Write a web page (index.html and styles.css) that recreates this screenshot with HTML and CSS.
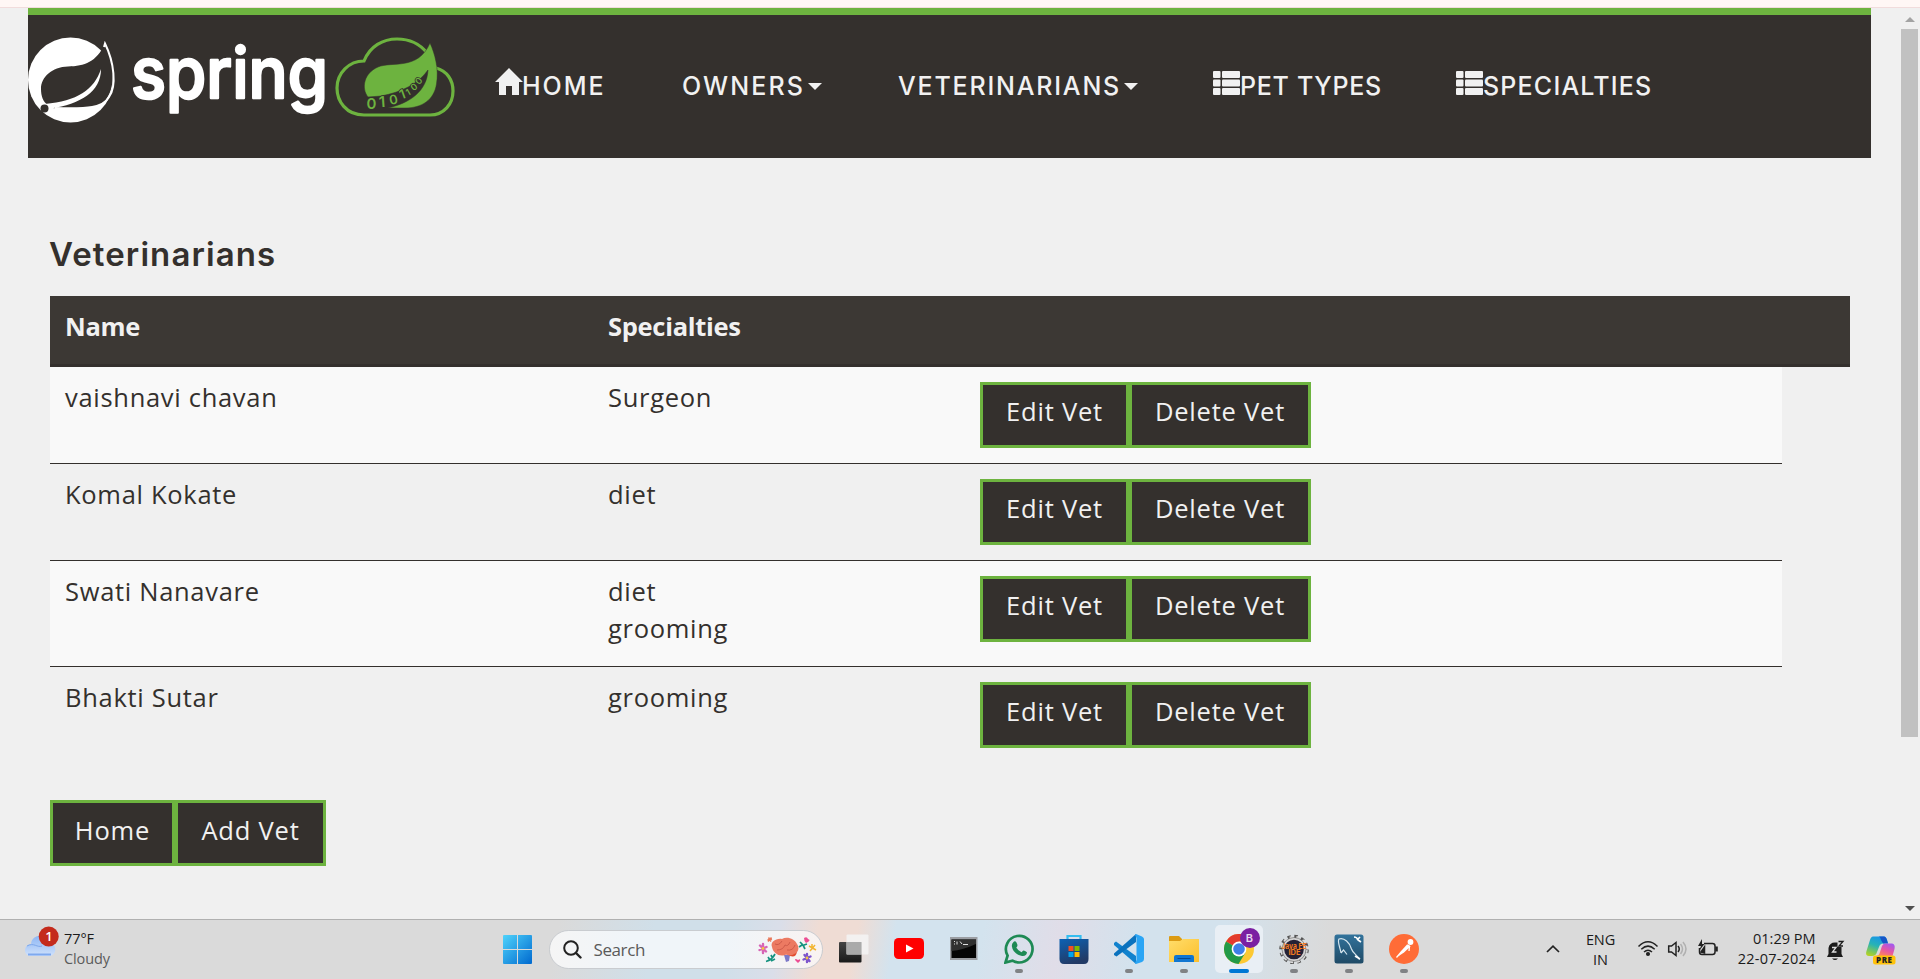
FILE: index.html
```html
<!DOCTYPE html>
<html lang="en">
<head>
<meta charset="utf-8">
<title>Veterinarians</title>
<link rel="stylesheet" href="styles.css">
</head>
<body>
<svg width="0" height="0" class="defs" aria-hidden="true">
  <defs>
    <linearGradient id="win" x1="0" y1="0" x2="1" y2="1"><stop offset="0" stop-color="#4fd3fb"/><stop offset="1" stop-color="#0069cf"/></linearGradient>
    <linearGradient id="cloud" x1="0" y1="0" x2="0" y2="1"><stop offset="0" stop-color="#8db6f4"/><stop offset="1" stop-color="#cfe1fb"/></linearGradient>
    <linearGradient id="store" x1="0" y1="0" x2="0.4" y2="1"><stop offset="0" stop-color="#0c62b4"/><stop offset="1" stop-color="#223a66"/></linearGradient>
    <linearGradient id="folder" x1="0" y1="0" x2="1" y2="1"><stop offset="0" stop-color="#ffdd6b"/><stop offset="1" stop-color="#fcbf2c"/></linearGradient>
    <linearGradient id="sql" x1="0" y1="0" x2="0" y2="1"><stop offset="0" stop-color="#32739c"/><stop offset="1" stop-color="#1f4a66"/></linearGradient>
    <linearGradient id="copA" x1="0.6" y1="0" x2="0.2" y2="1"><stop offset="0" stop-color="#1795e8"/><stop offset=".45" stop-color="#27b3b5"/><stop offset="1" stop-color="#b4d321"/></linearGradient>
    <linearGradient id="copB" x1="0.8" y1="0" x2="0.2" y2="1"><stop offset="0" stop-color="#a158f0"/><stop offset=".5" stop-color="#e556a5"/><stop offset="1" stop-color="#ff8a52"/></linearGradient>
    <linearGradient id="tvA" x1="0" y1="0" x2="0" y2="1"><stop offset="0" stop-color="#444"/><stop offset="1" stop-color="#1a1a1a"/></linearGradient>
    <symbol id="list" viewBox="0 0 27 24"><g fill="#f1f1f1"><rect width="7.500" height="7" rx="1"/><rect y="8.500" width="7.500" height="7" rx="1"/><rect y="17" width="7.500" height="7" rx="1"/><rect x="9" width="18" height="7" rx="1"/><rect x="9" y="8.500" width="18" height="7" rx="1"/><rect x="9" y="17" width="18" height="7" rx="1"/></g></symbol>
  </defs>
</svg>
<div class="strip"></div>
<div class="viewport">
  <div class="page">
    <nav class="navbar">
      <svg class="logo" width="430" height="110" viewBox="28 25 430 110">
        <circle cx="70.500" cy="80" r="42.500" fill="#fff"/>
        <path d="M105 44C96 62 85 66 68 66.500C52 67 41 77 41 89C41 96 43 102 48 105L52 108C88 109 101 108 107 98C116 85 114 62 105 44Z" fill="#34302d"/>
        <path d="M104 47L105 43.500C114 62 117 86 109 97C103 108 88 109 55 108" fill="none" stroke="#fff" stroke-width="2"/>
        <path d="M101 69C94 90 77 101 45 104L51 108.500C80 104 101 92 101 69Z" fill="#fff"/>
        <circle cx="44.500" cy="108.500" r="4" fill="#34302d"/>
        <text class="wordmark" x="131" y="98" textLength="197" lengthAdjust="spacingAndGlyphs">spring</text>
        <path d="M364 115C346 115 337 101 337 88C337 73 349 61 364 61C370 46 383 39 397 39C409 39 420 44 427 53L436 68C447 71 453 80 453 91C453 104 444 115 430 115Z" fill="none" stroke="#6db33f" stroke-width="3.200"/>
        <path d="M430 43C435 54 439 69 436.500 84C434 100 422 108 405 108H388C410 103 427 91 428 70C418 84 402 92 381 96L368 97C361 88 364 73 378 67C392 61 418 71 430 43Z" fill="#6db33f" stroke="#34302d" stroke-width=".5"/>
        <g class="bits"><text x="366.500" y="109">0</text><text x="379" y="107" transform="rotate(-4 384 103)">1</text><text class="b2" x="389" y="104" transform="rotate(-12 394 99)">0</text><text class="b2" x="400" y="99" transform="rotate(-20 402 96)">1</text><text class="b3" x="406" y="95" transform="rotate(-30 409 92)">1</text><text class="b3" x="411" y="90" transform="rotate(-40 414 87)">0</text><text class="b3" x="416" y="84" transform="rotate(-50 419 81)">0</text></g>
      </svg>
      <div class="menu">
        <a class="item home"><svg width="28" height="27" viewBox="0 0 28 27"><path d="M14 0L28 14H24V27H17V18H11V27H4V14H0Z" fill="#f1f1f1"/></svg><span>HOME</span></a>
        <a class="item owners"><span>OWNERS</span><i class="caret"></i></a>
        <a class="item vets"><span>VETERINARIANS</span><i class="caret"></i></a>
        <a class="item types"><svg width="27" height="24"><use href="#list"/></svg><span>PET TYPES</span></a>
        <a class="item specs"><svg width="27" height="24"><use href="#list"/></svg><span>SPECIALTIES</span></a>
      </div>
    </nav>
    <main class="content">
      <h2 class="title">Veterinarians</h2>
      <div class="thead"><div class="c-name">Name</div><div class="c-spec">Specialties</div></div>
      <div class="row odd"><div class="c-name">vaishnavi chavan</div><div class="c-spec">Surgeon</div><div class="actions"><button class="btn edit">Edit Vet</button><button class="btn delete">Delete Vet</button></div></div>
      <div class="row"><div class="c-name">Komal Kokate</div><div class="c-spec">diet</div><div class="actions"><button class="btn edit">Edit Vet</button><button class="btn delete">Delete Vet</button></div></div>
      <div class="row odd tall"><div class="c-name">Swati Nanavare</div><div class="c-spec">diet<br>grooming</div><div class="actions"><button class="btn edit">Edit Vet</button><button class="btn delete">Delete Vet</button></div></div>
      <div class="row last"><div class="c-name">Bhakti Sutar</div><div class="c-spec">grooming</div><div class="actions"><button class="btn edit">Edit Vet</button><button class="btn delete">Delete Vet</button></div></div>
      <div class="actions foot"><button class="btn go-home">Home</button><button class="btn add">Add Vet</button></div>
    </main>
  </div>
  <div class="scrollbar"><i class="up"></i><div class="thumb"></div><i class="down"></i></div>
</div>
<footer class="taskbar">
  <div class="weather">
    <svg width="36" height="32" viewBox="24 925 36 32"><path d="M31 956C23 956 23 945 31 944C32 934 46 933 48 942C57 942 58 956 49 956Z" fill="url(#cloud)"/><path d="M27 946C34 942 37 948 42 946" stroke="#7da7ea" fill="none"/><path d="M28 954.500H51" stroke="#7ea9ee" stroke-width="2"/><circle cx="48.700" cy="936.500" r="10" fill="#c42b1c"/><text class="badge" x="49" y="941">1</text></svg>
    <div class="lines"><span>77°F</span><span class="muted">Cloudy</span></div>
  </div>
  <svg class="start" width="30" height="30" viewBox="0 0 30 30"><path d="M0 1Q0 0 1 0H14V14H0ZM15 0H28Q29 0 29 1V14H15ZM0 15H14V29H1Q0 29 0 28ZM15 15H29V28Q29 29 28 29H15Z" fill="url(#win)"/></svg>
  <div class="search">
    <svg width="19" height="19" viewBox="0 0 19 19"><circle cx="8" cy="8" r="6.800" fill="none" stroke="#222" stroke-width="2"/><path d="M13 13L17.500 17.500" stroke="#222" stroke-width="2.400" stroke-linecap="round"/></svg>
    <span>Search</span>
    <svg class="brain" width="60" height="28" viewBox="757 936 60 28">
      <path d="M784 955L786 962L789 961L790 955Z" fill="#7c78c8"/><path d="M787 954Q795 960 797 952Z" fill="#e14b2e"/>
      <path d="M772 947C770 942 776 938 782 939C787 936 795 939 797 944C800 948 798 953 794 954C790 957 787 954 785 955C779 957 773 953 772 947Z" fill="#ec7a62"/>
      <path d="M775 944Q779 946 782 941M777 950Q783 950 785 945Q788 947 790 942M787 950Q793 951 795 945" fill="none" stroke="#cf5c4b" stroke-width="1"/>
      <g stroke="#d765b5" stroke-width="2.400" stroke-linecap="round"><path d="M760 945.500L766 951.500M763 944V953M759.500 950L766.500 947"/></g><circle cx="763" cy="948.500" r="1.400" fill="#f5c342"/>
      <g stroke="#7d55cc" stroke-width="2.400" stroke-linecap="round"><path d="M804.500 955L809.500 961M807 954V962M803.500 959.500L810.500 956.500"/></g><circle cx="807" cy="958" r="1.400" fill="#f5c342"/>
      <path d="M766 961.500Q772 960 775 954M768 957L770 960M771 955L772.500 958M771 961L775 959" fill="none" stroke="#15927f" stroke-width="1.700"/>
      <path d="M800 942L803 945L805 949M802 945L799 947M804 945L807 944" fill="none" stroke="#15927f" stroke-width="1.700"/>
      <path d="M804 938Q807 936 808 939Q812 940 806 943Q804 941 804 938Z" fill="#ec4e93"/><path d="M798 963L795 960Q795 958 798 960Q801 958 800 961Z" fill="#ec4e93"/>
      <path d="M809 946L816 950M815 945L810 951M812 944V949" stroke="#f2b632" stroke-width="1.500"/><path d="M767.500 940L772 939M768.500 937.500L771 941.500M771.500 937.500L768 941.500" stroke="#e9785a" stroke-width="1.500"/>
    </svg>
  </div>
  <div class="apps">
    <div class="app"><svg viewBox="0 0 30 30"><rect x="0" y="8" width="22.500" height="20.500" rx="1" fill="url(#tvA)"/><rect x="7.500" y=".5" width="22" height="20" rx="1" fill="#f4f4f4" opacity=".88"/><path d="M7.500 8H22.500V20.500H7.500Z" fill="#aaa"/></svg></div>
    <div class="app"><svg viewBox="0 0 30 30"><rect y="4" width="30" height="21" rx="4.500" fill="#f00"/><path d="M12 10.500V18.500L19.500 14.500Z" fill="#fff"/></svg></div>
    <div class="app"><svg viewBox="0 0 30 30"><rect x="1" y="3" width="27.500" height="23" fill="#9b9ea3"/><rect x="2.500" y="5.500" width="24.500" height="18.500" fill="#050505"/><path d="M2.500 5.500H27V10Q14 16 2.500 17Z" fill="#303030"/><path d="M5 7.500H6M5 10H6M8 7.500V10.500M11 7.500L13 10M14 10.500H19" stroke="#ddd"/></svg></div>
    <div class="app run"><svg viewBox="0 0 30 30"><path d="M1.500 28.500L3.600 21.600A13.300 13.300 0 1 1 8.500 26.600Z" fill="none" stroke="#1e8a54" stroke-width="2.700"/><path d="M9.500 8Q11 6.500 12.500 8.500L13.500 11Q13.500 12.500 12.300 13.500Q14 16.800 17.500 18.200L19 16.800Q20 16 23 18.300Q22.500 22.500 18 22Q9 20 7.800 12Q7.800 9.500 9.500 8Z" fill="#1e8a54"/></svg></div>
    <div class="app"><svg viewBox="0 0 30 30"><path d="M8.500 6V2H21.500V6" fill="none" stroke="#35bdf0" stroke-width="2.200"/><path d="M.5 5H29.500V25Q29.500 30 25 30H5Q.5 30 .5 25Z" fill="url(#store)"/><path d="M9.500 12H14.500V17H9.500Z" fill="#f25022"/><path d="M15.500 12H20.500V17H15.500Z" fill="#7fba00"/><path d="M9.500 18H14.500V23H9.500Z" fill="#00a4ef"/><path d="M15.500 18H20.500V23H15.500Z" fill="#ffb900"/></svg></div>
    <div class="app run"><svg viewBox="0 0 30 30"><path d="M0 9L2 7.500L22 22L22 30L0 11Z" fill="#1182ce"/><path d="M22 0V8L2.500 22.500L0 21V19.500Z" fill="#0a72be"/><path d="M22 0L28 2.500Q30 3.500 30 5V25Q30 27 28 28L22 30L21 29L22.500 26V4L21 1Z" fill="#2aa5f5"/></svg></div>
    <div class="app run"><svg viewBox="0 0 30 30"><path d="M0 3Q0 2 1 2H10L13 5V9H0Z" fill="#dc9b13"/><path d="M0 7H11L14 5H30V28H0Z" fill="url(#folder)"/><path d="M5 28V23Q5 21 7 21H23Q25 21 25 23V28Z" fill="#1076d2"/><path d="M8.500 24.500H21.500" stroke="#074a91"/></svg></div>
    <div class="app run active"><svg viewBox="0 0 30 30"><circle cx="15" cy="15" r="15" fill="#fcc934"/><path d="M15 15L2 7.500A15 15 0 0 1 28 7.500H15Z" fill="#e33b2e"/><path d="M15 15L2 7.500A15 15 0 0 0 14.500 30L21.500 18.500Z" fill="#229a48"/><circle cx="15" cy="15" r="7.400" fill="#fff"/><circle cx="15" cy="15" r="5.800" fill="#3e7fe8"/></svg><b class="profile">B</b></div>
    <div class="app run"><svg viewBox="0 0 30 30"><circle cx="15" cy="15.500" r="13" fill="none" stroke="#555" stroke-width="3.500" stroke-dasharray="3.400 3.400"/><circle cx="15" cy="15.500" r="12.600" fill="none" stroke="#ddd" stroke-width="2.200" stroke-dasharray="3 3.800" stroke-dashoffset="-.2"/><circle cx="15" cy="15.500" r="10.800" fill="#252135" stroke="#d4d4d4" stroke-width="2"/><circle cx="15" cy="15.500" r="12" fill="none" stroke="#666" stroke-width=".6"/><text class="java" x="15" y="14.500" textLength="25" lengthAdjust="spacingAndGlyphs">Java EE</text><text class="java" x="15.500" y="21">IDE</text></svg></div>
    <div class="app run"><svg viewBox="0 0 30 30"><rect x=".5" y=".5" width="29" height="29" rx="2.500" fill="url(#sql)"/><path d="M7 19C6 13 3 7 5 5C10 3 16 9 17.500 15C19 20 24 21 25.500 25.500M7 19L9.500 16L13 20.500" fill="none" stroke="#d5e5ee" stroke-width="1.200"/><path d="M20 3Q23 3 24 6L27 8M23 6L26 3M21 22L26 25" stroke="#fff" stroke-width="1.700" fill="none"/></svg></div>
    <div class="app run"><svg viewBox="0 0 30 30"><circle cx="15" cy="15" r="15" fill="#ff6c37"/><circle cx="21.500" cy="8" r="2.900" fill="#fff"/><path d="M18 10.500Q20 10 21.500 12.500L15 18.500L9 22.500L13 16Z" fill="#fff"/><path d="M13 17L7.500 23.500M20.500 12L20 17" stroke="#fff" stroke-width="1.300"/></svg></div>
  </div>
  <svg class="chev" width="14" height="8" viewBox="0 0 14 8"><path d="M1 7L7 1.200L13 7" fill="none" stroke="#222" stroke-width="1.700"/></svg>
  <div class="lang"><span>ENG</span><span>IN</span></div>
  <svg class="status" width="82" height="20" viewBox="1637 938 82 20" fill="none" stroke="#222" stroke-width="1.500">
    <path d="M1638.500 946.500Q1648 937 1657.500 946.500M1641.300 949.300Q1648 943 1654.700 949.300M1644 952Q1648 948.500 1652 952"/><circle cx="1648" cy="954" r="1.300" fill="#222"/>
    <path d="M1668.700 946V952H1671.500L1676 955.500V942.500L1671.500 946Z"/><path d="M1678 946Q1680.500 949 1678 952"/><path d="M1680.500 944Q1684.500 949 1680.500 954M1683 942Q1689 949 1683 956" stroke="#b0b0b0"/>
    <path d="M1704 943.500H1712.500Q1715 943.500 1715 946V952Q1715 954.500 1712.500 954.500H1702Q1699.500 954.500 1699.500 952V948"/><path d="M1716.500 946.500V951.500" stroke-width="2.600"/><path d="M1702 939L1698 946H1701L1699 951L1704.500 944H1702Z" fill="#222" stroke="none"/><path d="M1701 952L1704.500 947V953Z" fill="#222"/>
  </svg>
  <div class="clock"><span>01:29 PM</span><span class="date">22-07-2024</span></div>
  <svg class="bell" width="19" height="21" viewBox="0 0 19 21"><path d="M2.500 14V8Q3.500 2.500 9 2.500H11.500V7H15.500V14L17 17H1Z" fill="#1c1c1c"/><path d="M6 18.500H12Q9 21.500 6 18.500Z" fill="#1c1c1c"/><path d="M6 7.500H10L6.500 12H10.500" stroke="#ddd" stroke-width="1.300" fill="none"/><path d="M12.500 1.500H17L13 6H17" stroke="#1c1c1c" stroke-width="1.300" fill="none"/></svg>
  <svg class="copilot" width="30" height="29" viewBox="0 0 30 29"><path d="M7 .5H18Q20 .5 21 4L22 7.500H17Q14 7.500 13 11L11 16Q10 20 6 20H3Q-1 20 .5 15L4 4Q5 .5 7 .5Z" fill="url(#copA)"/><path d="M13 .5H18Q20 .5 21 4L22 7.500H17L15 4Q14.500 1 13 .5Z" fill="#1656c7"/><path d="M19 7.500H26Q29.500 8 28.500 13L26.500 20H10Q13 20 14 16L16 10Q17 7.500 19 7.500Z" fill="url(#copB)"/><rect x="7" y="19.500" width="22.500" height="9" rx="2.500" fill="#ffc20a"/><text class="pre" x="18.300" y="27">PRE</text></svg>
</footer>
</body>
</html>
```

FILE: styles.css
```css
* { box-sizing: border-box; }
body {
  margin: 0;
  width: 1920px;
  height: 979px;
  overflow: hidden;
  display: flex;
  flex-direction: column;
  background: #f0f0f0;
  color: #34302d;
  font-family: "Open Sans", "Noto Sans", sans-serif;
}
.defs { position: absolute; }
svg { display: block; flex: none; }
.strip { height: 8px; background: #fff7f5; border-bottom: 1px solid #f1dcdc; }
.viewport { flex: 1; display: flex; min-height: 0; }
.page { flex: 1; padding-left: 28px; }

.navbar {
  width: 1843px;
  height: 150px;
  background: #34302d;
  border-top: 7px solid #6db33f;
  display: flex;
  padding-top: 10px;
}
.logo { overflow: visible; }
.wordmark { font: 500 70px Inter, sans-serif; fill: #fff; stroke: #fff; stroke-width: 2.5px; stroke-linejoin: round; }
.bits { font: 600 15px Inter, sans-serif; fill: #6db33f; stroke: #34302d; stroke-width: 1.5px; paint-order: stroke; }
.bits .b2 { font-size: 13px; }
.bits .b3 { font-size: 9px; }
.menu { display: flex; padding: 43px 0 0 37px; }
.item {
  display: flex;
  align-items: center;
  height: 36px;
  color: #f1f1f1;
  font: 500 25px/36px Inter, sans-serif;
  white-space: nowrap;
}
.item svg { margin-top: -6px; }
.home svg { margin-top: -10px; }
.home { width: 187px; letter-spacing: 2px; }
.owners { width: 216px; letter-spacing: 2.1px; }
.vets { width: 315px; letter-spacing: 1.8px; }
.types { width: 243px; letter-spacing: 0.7px; }
.specs { letter-spacing: 1.2px; }
.home span { margin-left: -1px; }
.caret { border: 7px solid transparent; border-top-color: #f1f1f1; border-bottom: 0; margin-left: 3px; }

.content { width: 1822px; padding: 74px 0 0 22px; }
.title { margin: 0 0 0 -1px; height: 64px; font: 600 33px/44px Inter, sans-serif; letter-spacing: 1.1px; }
.thead, .row { display: flex; padding-left: 15px; font-size: 25.5px; line-height: 37px; }
.thead {
  width: 1800px;
  height: 71px;
  padding-top: 12px;
  background: #3c3834;
  border-bottom: 3px solid #34302d;
  color: #f1f1f1;
  font-weight: 700;
  letter-spacing: -0.3px;
}
.row { width: 1732px; height: 97px; padding-top: 15px; border-bottom: 1px solid #34302d; letter-spacing: 0.7px; }
.row .c-name, .row .c-spec { margin-top: -3px; }
.odd { background: #f9f9f9; }
.tall { height: 106px; }
.last { border: 0; height: 118px; }
.c-name { width: 543px; }
.c-spec { width: 372px; }
.actions { display: flex; }
.foot { padding-top: 15px; }
.btn {
  height: 66px;
  padding: 0 0 9px;
  border: 3px solid #6db33f;
  background: #34302d;
  color: #f1f1f1;
  font: 25.5px "Open Sans", sans-serif;
  letter-spacing: 0.8px;
}
.foot .btn { padding-bottom: 7px; }
.edit { width: 149px; }
.delete { width: 182px; }
.go-home { width: 125px; }
.add { width: 151px; }

.scrollbar { width: 19px; height: 100%; display: flex; flex-direction: column; align-items: center; padding: 9px 2px 8px 0; }
.up, .down { border: 5px solid transparent; }
.up { border-top: 0; border-bottom-color: #a3a3a3; }
.down { border-bottom: 0; border-top-color: #505050; margin-top: auto; }
.thumb { width: 17px; height: 708px; margin-top: 7px; background: #c1c1c1; }

.taskbar {
  height: 60px;
  border-top: 1px solid #b0b0b0;
  display: flex;
  align-items: flex-start;
  background: linear-gradient(100deg, #dadada 0 29%, #d0dfe9 34% 38%, #dadee9 40.5%, #efdcd4 42.5% 44.5%, #d3e3ee 46.5% 51%, #e0dde8 55%, #d3e2ed 59% 63.5%, #dadada 69%);
  color: #1b1b1b;
  font-size: 14.5px;
  line-height: 20px;
}
.taskbar span { white-space: nowrap; }
.weather { width: 503px; display: flex; padding: 5px 0 0 24px; gap: 4px; }
.lines, .lang, .clock { display: flex; flex-direction: column; }
.lines { padding-top: 4px; letter-spacing: -0.1px; }
.muted { color: #5b5b5b; }
.badge { font: 600 13px "Open Sans", sans-serif; fill: #fff; text-anchor: middle; }
.start { margin-top: 15px; }
.search {
  width: 274px;
  height: 39px;
  margin: 10px 0 0 15.5px;
  padding: 0 5px 0 13px;
  border-radius: 20px;
  border: 1px solid #c9ccd0;
  background: linear-gradient(90deg, #f5f5f5, #f0f5f9 30% 65%, #f9f3f1);
  display: flex;
  align-items: center;
  color: #5a5a5a;
  font-size: 17px;
  letter-spacing: -0.4px;
}
.search span { margin-left: 12px; }
.brain { margin-left: auto; }
.apps { display: flex; margin-left: 4px; }
.app { position: relative; width: 55px; height: 59px; padding-top: 14px; display: flex; justify-content: center; }
.app svg { width: 30px; height: 30px; position: relative; }
.run::after { content: ""; position: absolute; bottom: 6px; left: 23.500px; width: 8px; height: 4px; border-radius: 2px; background: #808285; }
.active::before { content: ""; position: absolute; left: 3.500px; top: 5px; width: 48px; height: 48px; border-radius: 5px; background: #e9eff5; }
.active.run::after { width: 20px; left: 17.500px; background: #0078d4; }
.profile { position: absolute; left: 28px; top: 8px; width: 20px; height: 20px; border-radius: 50%; background: #7b1fa2; color: #e7d7ee; font: 600 11px/20px Inter, sans-serif; text-align: center; }
.java { font: 700 7.5px Inter, sans-serif; fill: #f47b20; text-anchor: middle; }
.chev { margin: 25px 0 0 114px; }
.lang { width: 34px; margin: 10px 0 0 24px; align-items: center; letter-spacing: -0.1px; }
.status { margin: 18px 0 0 19px; }
.clock { width: 78px; margin: 9px 0 0 19px; align-items: flex-end; letter-spacing: 0; }
.date { letter-spacing: 0.2px; }
.bell { margin: 20px 0 0 10px; }
.copilot { margin: 16px 0 0 21px; }
.pre { font: 800 8px "Open Sans", sans-serif; fill: #222; text-anchor: middle; letter-spacing: 0.5px; }
```
